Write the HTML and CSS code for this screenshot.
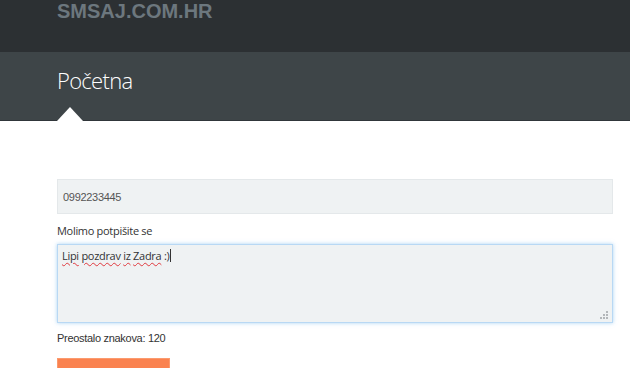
FILE: index.html
```html
<!DOCTYPE html>
<html lang="hr">
  <head>
    <meta charset="UTF-8" />
    <meta name="viewport" content="width=device-width, initial-scale=1.0" />
    <title>SMSAJ.COM.HR</title>
    <link rel="stylesheet" href="styles.css">
  </head>
  <body>
    <header class="top-bar">
      <div class="wrap">
        <span class="logo">SMSAJ.COM.HR</span>
      </div>
    </header>
    <div class="page-title">
      <div class="wrap">
        <h1>Početna</h1>
        <span class="pointer"></span>
      </div>
    </div>
    <main class="wrap content">
      <form class="sms-form">
        <input class="field" type="text" value="0992233445" />
        <label class="label" for="poruka">Molimo potpišite se</label>
        <div class="area-box">
          <div id="poruka" class="field area" role="textbox" contenteditable="true"><span class="typo">Lipi</span> <span class="typo">pozdrav</span> <span class="typo">iz</span> <span class="typo">Zadra</span> :)<span class="caret"></span></div>
          <svg class="grip" viewBox="0 0 9 9">
            <rect x="7" y="1" width="2" height="2" />
            <rect x="4" y="4" width="2" height="2" />
            <rect x="7" y="4" width="2" height="2" />
            <rect x="1" y="7" width="2" height="2" />
            <rect x="4" y="7" width="2" height="2" />
            <rect x="7" y="7" width="2" height="2" />
          </svg>
        </div>
        <p class="counter">Preostalo znakova: 120</p>
        <button class="send" type="button">Pošalji</button>
      </form>
    </main>
  </body>
</html>
```

FILE: styles.css
```css
body {
  margin: 0;
  background: white;
  font-family: "Liberation Sans", Arial, sans-serif;
  color: #333;
  overflow: hidden;
}
.wrap {
  padding-left: 57px;
  width: 556px;
}
.top-bar {
  display: flex;
  background-color: #2c3033;
  height: 52px;
}
.logo {
  display: block;
  margin-top: -1px;
  font-size: 20px;
  font-weight: bold;
  color: #6c777e;
  line-height: 24px;
}
.page-title {
  background-color: #3e4548;
  height: 68px;
  border-bottom: 1px solid #30363a;
}
.page-title .wrap {
  position: relative;
  height: 100%;
}
h1 {
  margin: 0;
  padding-top: 13px;
  font-family: "Open Sans", sans-serif;
  font-weight: 300;
  font-size: 22px;
  line-height: 30px;
  color: white;
  letter-spacing: -0.7px;
}
.pointer {
  position: absolute;
  left: 57px;
  bottom: -1px;
  width: 0;
  height: 0;
  border-left: 13px solid transparent;
  border-right: 13px solid transparent;
  border-bottom: 14px solid white;
}
.content {
  padding-top: 58px;
}
.sms-form {
  display: flex;
  flex-direction: column;
}
.field {
  box-sizing: border-box;
  width: 100%;
  margin: 0;
  background-color: #eff2f3;
  border: 1px solid #e4e8ea;
  font-family: "Liberation Sans", Arial, sans-serif;
  font-size: 11px;
  letter-spacing: -0.3px;
  color: #555;
  outline: none;
}
input.field {
  height: 35px;
  padding: 0 5px;
}
.label {
  font-family: "Open Sans", sans-serif;
  font-size: 11px;
  letter-spacing: -0.3px;
  color: #333;
  margin: 8px 0 4px;
  line-height: 18px;
}
.area-box {
  position: relative;
}
.area {
  height: 79px;
  padding: 3px 4px;
  font-family: "Open Sans", sans-serif;
  font-size: 11px;
  line-height: 16px;
  color: #333;
  border-color: #b8d8f4;
  box-shadow: 0 0 4px rgba(102, 175, 233, 0.55);
}
.typo {
  text-decoration: underline wavy #e0393e;
  text-decoration-thickness: 1px;
  text-underline-offset: 2px;
}
.caret {
  display: inline-block;
  width: 1px;
  height: 13px;
  margin-left: 1px;
  vertical-align: -2px;
  background-color: #333;
}
.grip {
  position: absolute;
  right: 5px;
  bottom: 4px;
  width: 9px;
  height: 9px;
  fill: #b3b7ba;
}
.counter {
  margin: 7px 0 0;
  font-size: 11px;
  letter-spacing: -0.3px;
  line-height: 16px;
  color: #333;
}
.send {
  margin-top: 12px;
  width: 113px;
  height: 44px;
  background-color: #fa824f;
  border: 1px solid #fb9a6e;
  color: white;
  font-size: 14px;
}
```
